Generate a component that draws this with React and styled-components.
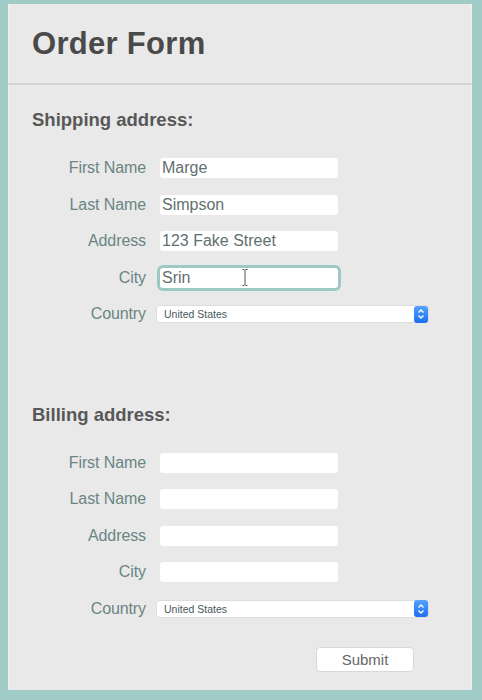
import React from 'react';
import styled, { createGlobalStyle } from 'styled-components';

const Global = createGlobalStyle`
  html, body { margin: 0; padding: 0; background: #a0cbc7; }
  body { font-family: "Liberation Sans", Arial, sans-serif; }
`;

const Page = styled.div`
  width: 482px;
  height: 700px;
  box-sizing: border-box;
  padding: 4px 10px 10px 8px;
  background: #a0cbc7;
`;

const Panel = styled.div`
  width: 464px;
  height: 686px;
  background: #e9e9e9;
  display: flex;
  flex-direction: column;
  box-shadow: inset -1px 0 0 #f1f1f1, inset 1px 0 0 #f1f1f1;
`;

const Header = styled.header`
  height: 79px;
  border-bottom: 2px solid #d5d5d5;
  display: flex;
  align-items: center;
  padding-left: 24px;
`;

const Title = styled.h1`
  margin: 0;
  font-size: 31px;
  font-weight: bold;
  color: #4a4a4a;
  letter-spacing: 0.3px;
`;

const Body = styled.div`
  padding: 23px 24px 0;
  display: flex;
  flex-direction: column;
`;

const Section = styled.section`
  display: flex;
  flex-direction: column;
  margin-bottom: ${p => p.$after}px;
`;

const SectionTitle = styled.h2`
  margin: 0 0 19px;
  font-size: 18.5px;
  line-height: 23px;
  font-weight: bold;
  color: #585858;
`;

const Row = styled.div`
  display: grid;
  grid-template-columns: 114px auto;
  column-gap: 14px;
  height: 36.5px;
  align-items: center;
`;

const Label = styled.label`
  text-align: right;
  font-size: 16px;
  color: #6a8583;
  letter-spacing: -0.1px;
`;

const FieldWrap = styled.div`
  position: relative;
  width: 178px;
  height: 20px;
`;

const TextInput = styled.input`
  display: block;
  width: 178px;
  height: 20px;
  box-sizing: border-box;
  border: none;
  outline: none;
  border-radius: 3px;
  background: #fff;
  padding: 0 2px;
  font-family: "Liberation Sans", Arial, sans-serif;
  font-size: 16px;
  color: #62706f;
  box-shadow: ${p => (p.$focused ? '0 0 0 3px #9dc9c4' : 'none')};
`;

const IBeam = styled.svg`
  position: absolute;
  left: 82px;
  top: 1px;
  pointer-events: none;
`;

const Select = styled.div`
  margin-left: -3px;
  width: 271px;
  height: 16px;
  background: #fff;
  border-radius: 3px;
  box-shadow: 0 0 0 1px #dedede;
  display: flex;
  align-items: center;
  justify-content: space-between;
`;

const SelectText = styled.span`
  padding-left: 7px;
  font-size: 10.5px;
  color: #46595a;
`;

const Stepper = styled.span`
  width: 14px;
  height: 17px;
  border-radius: 3px;
  background: linear-gradient(#55a2ff, #1c6fef);
  display: flex;
  align-items: center;
  justify-content: center;
`;

const ButtonRow = styled.div`
  display: flex;
  justify-content: flex-end;
  padding: 20px 34px 0 0;
`;

const Button = styled.button`
  width: 98px;
  height: 25px;
  background: #fff;
  border: 1px solid #d8d8d8;
  border-radius: 4px;
  font-family: "Liberation Sans", Arial, sans-serif;
  font-size: 15px;
  color: #666;
  padding: 0;
`;

function Field({ label, value, focused }) {
  return (
    <Row>
      <Label>{label}</Label>
      <FieldWrap>
        <TextInput readOnly value={value} $focused={focused} />
        {focused && (
          <IBeam width="6" height="17" viewBox="0 0 6 17">
            <path d="M0.5 0.5h2M3.5 0.5h2M3 1v15M0.5 16.5h2M3.5 16.5h2" stroke="#555" strokeWidth="1" fill="none" />
          </IBeam>
        )}
      </FieldWrap>
    </Row>
  );
}

function CountryRow() {
  return (
    <Row>
      <Label>Country</Label>
      <Select>
        <SelectText>United States</SelectText>
        <Stepper>
          <svg width="8" height="12" viewBox="0 0 8 12">
            <path d="M1.5 4.5L4 2l2.5 2.5M1.5 7.5L4 10l2.5-2.5" stroke="#fff" strokeWidth="1.3" fill="none" />
          </svg>
        </Stepper>
      </Select>
    </Row>
  );
}

function Address({ title, values, after }) {
  return (
    <Section $after={after}>
      <SectionTitle>{title}</SectionTitle>
      <Field label="First Name" value={values[0]} />
      <Field label="Last Name" value={values[1]} />
      <Field label="Address" value={values[2]} />
      <Field label="City" value={values[3]} focused={values[3] === 'Srin'} />
      <CountryRow />
    </Section>
  );
}

export default function App() {
  return (
    <>
      <Global />
      <Page>
        <Panel>
          <Header>
            <Title>Order Form</Title>
          </Header>
          <Body>
            <Address title="Shipping address:" values={['Marge', 'Simpson', '123 Fake Street', 'Srin']} after={70} />
            <Address title="Billing address:" values={['', '', '', '']} after={0} />
            <ButtonRow>
              <Button>Submit</Button>
            </ButtonRow>
          </Body>
        </Panel>
      </Page>
    </>
  );
}
